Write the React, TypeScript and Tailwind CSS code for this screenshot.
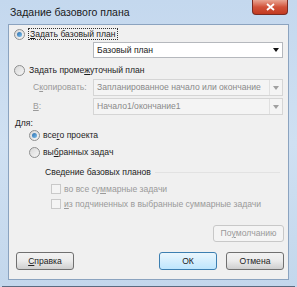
import React from 'react';

const font = { fontFamily: '"Liberation Sans", Arial, sans-serif' };

const Radio: React.FC<{ checked?: boolean }> = ({ checked }) => (
  <span className="relative flex h-[11px] w-[11px] shrink-0 items-center justify-center rounded-full border border-[#8e8f8f] bg-gradient-to-br from-[#d8d8d8] to-[#f6f6f6]">
    {checked && (
      <span className="h-[5px] w-[5px] rounded-full bg-gradient-to-br from-[#2b6fae] to-[#7fc0ec]" />
    )}
  </span>
);

const Check: React.FC = () => (
  <span className="h-[10px] w-[10px] shrink-0 border border-[#c9c9c9] bg-[#f4f4f4]" />
);

const Select: React.FC<{ text: string; disabled?: boolean; h: string }> = ({ text, disabled, h }) => (
  <div
    className={`flex ${h} w-[190px] items-center border ${
      disabled ? 'border-[#d5d5d5] bg-[#f4f4f4] text-[#8a8a8a]' : 'border-[#b5b8bd] bg-white text-[#222]'
    }`}
  >
    <span className="flex-1 whitespace-nowrap pl-[3px] leading-none">{text}</span>
    <span
      className={`flex h-full w-[13px] items-center justify-center ${
        disabled ? 'border-l border-[#e0e0e0]' : ''
      }`}
    >
      <svg width="6" height="4" viewBox="0 0 6 4">
        <path d="M0 0h6L3 4z" fill={disabled ? '#a0a0a0' : '#111'} />
      </svg>
    </span>
  </div>
);

const Button: React.FC<{ children: React.ReactNode; w: string; primary?: boolean }> = ({ children, w, primary }) => (
  <div
    className={`flex h-[18px] ${w} items-center justify-center rounded-[3px] border leading-none text-[#222] ${
      primary
        ? 'border-[#3c7fb1] bg-gradient-to-b from-[#eaf6fd] to-[#bee6fd]'
        : 'border-[#707070] bg-gradient-to-b from-[#f2f2f2] via-[#ebebeb] to-[#cfcfcf]'
    }`}
  >
    {children}
  </div>
);

export default function App() {
  return (
    <div
      className="relative flex h-[287px] w-[297px] flex-col overflow-hidden bg-gradient-to-b from-[#c4d8ee] via-[#cfe0f2] to-[#c3d7ec] whitespace-nowrap"
      style={font}
    >
      {/* title bar */}
      <div className="flex h-[24px] shrink-0 items-start justify-between pl-[10px]">
        <span className="mt-[7px] text-[10.5px] leading-none text-[#1a1a1a]">Задание базового плана</span>
        <div className="mr-[9px] flex h-[15px] w-[36px] items-center justify-center rounded-b-[4px] border border-t-0 border-[#7a2b22] bg-gradient-to-b from-[#e8a593] via-[#d1523a] to-[#c23a20]">
          <svg width="9" height="8" viewBox="0 0 9 8">
            <path d="M1 1l7 6M8 1L1 7" stroke="#fff" strokeWidth="1.8" />
          </svg>
        </div>
      </div>

      {/* client area */}
      <div className="mx-[8px] flex h-[256px] flex-col border border-[#8ba3bf] bg-[#f0f0f0] text-[8.6px] leading-none text-[#1e1e1e]">
        <div className="mt-[2px] flex h-[14px] items-center pl-[5px]">
          <Radio checked />
          <span className="ml-[3px] border border-dotted border-[#333] px-[1px] py-[1px]">
            <u>З</u>адать базовый план
          </span>
        </div>
        <div className="mt-[1px] pl-[84px]">
          <Select text="Базовый план" h="h-[16px]" />
        </div>
        <div className="mt-[6px] flex h-[12px] items-center pl-[5px]">
          <Radio />
          <span className="ml-[4px]">
            Задать проме<u>ж</u>уточный план
          </span>
        </div>
        <div className="mt-[3px] flex items-center">
          <span className="w-[84px] pl-[24px] text-[#9a9a9a]">
            С<u>к</u>опировать:
          </span>
          <Select text="Запланированное начало или окончание" disabled h="h-[17px]" />
        </div>
        <div className="mt-[2px] flex items-center">
          <span className="w-[84px] pl-[24px] text-[#9a9a9a]">
            <u>В</u>:
          </span>
          <Select text="Начало1/окончание1" disabled h="h-[17px]" />
        </div>
        <div className="mt-[2px] flex h-[12px] items-center pl-[6px]">Для:</div>
        <div className="flex h-[12px] items-center pl-[20px]">
          <Radio checked />
          <span className="ml-[3px]">
            все<u>г</u>о проекта
          </span>
        </div>
        <div className="mt-[5px] flex h-[12px] items-center pl-[20px]">
          <Radio />
          <span className="ml-[3px]">
            вы<u>б</u>ранных задач
          </span>
        </div>
        <div className="mt-[8px] flex h-[12px] items-center pl-[36px] pr-[8px]">
          <span className="text-[#222]">Сведение базовых планов</span>
          <span className="ml-[4px] h-px flex-1 bg-[#e2e2e2]" />
        </div>
        <div className="mt-[5px] flex h-[12px] items-center pl-[42px] text-[#9a9a9a]">
          <Check />
          <span className="ml-[3px]">
            во все су<u>м</u>марные задачи
          </span>
        </div>
        <div className="mt-[3px] flex h-[12px] items-center pl-[42px] text-[#9a9a9a]">
          <Check />
          <span className="ml-[3px]">
            <u>и</u>з подчиненных в выбранные суммарные задачи
          </span>
        </div>
        <div className="mt-[15px] flex justify-end pr-[4px]">
          <div className="flex h-[17px] w-[71px] items-center justify-center rounded-[3px] border border-[#c8c8c8] bg-[#f4f4f4] text-[#9a9a9a]">
            По <u>у</u>молчанию
          </div>
        </div>
        <div className="mt-[10px] flex items-center px-[7px] pr-[4px]">
          <Button w="w-[58px]">
            <u>С</u>правка
          </Button>
          <div className="flex-1" />
          <Button w="w-[58px]" primary>
            ОК
          </Button>
          <div className="w-[9px]" />
          <Button w="w-[58px]">Отмена</Button>
        </div>
      </div>
      <div className="mx-[2px] mt-auto h-[4px] border-b border-[#5a6b80]" />
    </div>
  );
}
